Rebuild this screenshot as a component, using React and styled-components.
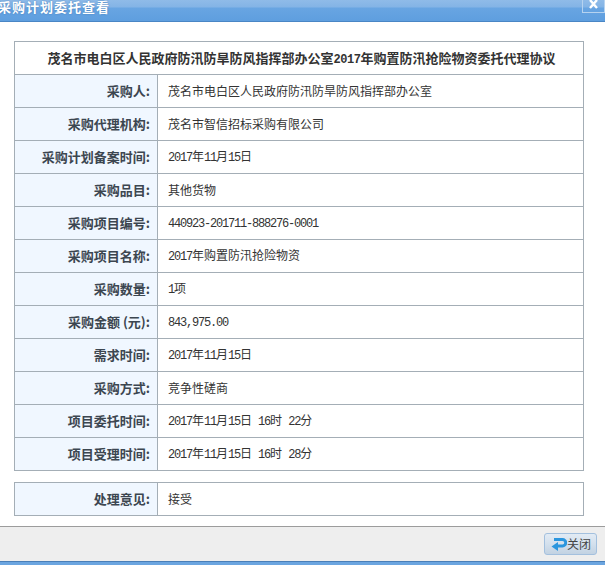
import { createGlobalStyle, styled } from 'styled-components';

const GlobalStyle = createGlobalStyle`
  html, body {
    margin: 0;
    padding: 0;
    background: #fff;
    overflow: hidden;
  }
`;

const cjk = `"Noto Sans CJK SC", "Liberation Sans", sans-serif`;

const Dialog = styled.div`
  width: 605px;
  height: 565px;
  display: flex;
  flex-direction: column;
  font-family: ${cjk};
  color: #333;
  overflow: hidden;
`;

const TitleBar = styled.div`
  flex: 0 0 22px;
  box-sizing: border-box;
  display: flex;
  justify-content: space-between;
  align-items: flex-start;
  background: linear-gradient(#8fbbe8 0, #84b4e6 7px, #68a5e2 8px, #5f9fdf 20px);
  border-bottom: 1px solid #4a86c5;
`;

const TitleText = styled.div`
  margin: -3px 0 0 -2px;
  font-size: 13px;
  line-height: 20px;
  font-weight: 700;
  letter-spacing: 1px;
  color: #fff;
  text-shadow: 0 0 2px #3f78b5;
`;

const CloseBox = styled.div`
  width: 23px;
  height: 13px;
  box-sizing: border-box;
  border: 1px solid #b6d3f0;
  border-top: 0;
  display: flex;
  align-items: flex-start;
  justify-content: center;
`;

const Body = styled.div`
  flex: 1;
  padding: 19px 21px 0 14px;
`;

const Table = styled.table`
  width: 570px;
  border-collapse: collapse;
  table-layout: fixed;
  margin-bottom: ${(p) => p.$gap || 0}px;
`;

const LabelCol = styled.col`
  width: 143px;
`;

const TitleCell = styled.th`
  height: 30px;
  padding: 0 0 2px 5px;
  border: 1px solid #a4aeb6;
  font-size: 13px;
  font-weight: 700;
  color: #333;
  text-align: center;
  white-space: nowrap;
`;

const Label = styled.th`
  height: 30px;
  padding: 0 7px 2px 0;
  border: 1px solid #a4aeb6;
  background: #f0f7ff;
  font-size: 13px;
  font-weight: 700;
  color: #3c4650;
  text-align: right;
  white-space: nowrap;
`;

const Value = styled.td`
  height: 30px;
  padding: 0 0 2px 10px;
  border: 1px solid #a4aeb6;
  font-size: 12px;
  color: #333;
`;

const Num = styled.span`
  font-family: "Liberation Mono", monospace;
  font-size: 12px;
  letter-spacing: ${(p) => p.$spacing || -1.2}px;
  white-space: pre;
`;

const Footer = styled.div`
  flex: 0 0 35px;
  box-sizing: border-box;
  display: flex;
  justify-content: flex-end;
  align-items: center;
  padding: 0 8px 1px 0;
  background: #eeeeee;
  border-top: 1px solid #9c9c9c;
`;

const CloseButton = styled.button`
  width: 53px;
  height: 22px;
  padding: 0 0 0 6px;
  display: flex;
  align-items: center;
  box-sizing: border-box;
  border: 1px solid #a3c0de;
  border-radius: 3px;
  background: linear-gradient(#e2ebf4, #d3e0ed 50%, #c2d2e2);
  font-family: ${cjk};
  font-size: 12px;
  color: #444;
`;

const BottomEdge = styled.div`
  flex: 0 0 4px;
  background: #6ba5e0;
  border-top: 1px solid #4a7fb8;
  box-sizing: border-box;
`;

const fullDate = (
  <>
    <Num>2017</Num>年<Num>11</Num>月<Num>15</Num>日
  </>
);

const rows = [
  ['采购人:', '茂名市电白区人民政府防汛防旱防风指挥部办公室'],
  ['采购代理机构:', '茂名市智信招标采购有限公司'],
  ['采购计划备案时间:', fullDate],
  ['采购品目:', '其他货物'],
  ['采购项目编号:', <Num>440923-201711-888276-0001</Num>],
  ['采购项目名称:', <><Num>2017</Num>年购置防汛抢险物资</>],
  ['采购数量:', <><Num>1</Num>项</>],
  ['采购金额 (元):', <Num>843,975.00</Num>],
  ['需求时间:', fullDate],
  ['采购方式:', '竞争性磋商'],
  ['项目委托时间:', <>{fullDate}<Num> 16</Num>时<Num> 22</Num>分</>],
  ['项目受理时间:', <>{fullDate}<Num> 16</Num>时<Num> 28</Num>分</>],
];

function ReturnIcon() {
  return (
    <svg width="16" height="16" viewBox="0 0 16 16">
      <path d="M3 3.5h8.5a3.2 3.2 0 0 1 0 6.5H6" fill="none" stroke="#2b96de" strokeWidth="3" />
      <path d="M7 6v9L0.5 10.5z" fill="#2b96de" />
    </svg>
  );
}

export default function App() {
  return (
    <Dialog>
      <GlobalStyle />
      <TitleBar>
        <TitleText>采购计划委托查看</TitleText>
        <CloseBox>
          <svg width="9" height="9" viewBox="0 0 9 9">
            <path d="M1 0l7 8M8 0l-7 8" stroke="#fff" strokeWidth="2.4" />
          </svg>
        </CloseBox>
      </TitleBar>
      <Body>
        <Table $gap={11}>
          <colgroup>
            <LabelCol />
            <col />
          </colgroup>
          <tbody>
            <tr>
              <TitleCell colSpan={2}>
                茂名市电白区人民政府防汛防旱防风指挥部办公室<Num $spacing={-0.5}>2017</Num>年购置防汛抢险物资委托代理协议
              </TitleCell>
            </tr>
            {rows.map(([label, value]) => (
              <tr key={label}>
                <Label>{label}</Label>
                <Value>{value}</Value>
              </tr>
            ))}
          </tbody>
        </Table>
        <Table>
          <colgroup>
            <LabelCol />
            <col />
          </colgroup>
          <tbody>
            <tr>
              <Label>处理意见:</Label>
              <Value>接受</Value>
            </tr>
          </tbody>
        </Table>
      </Body>
      <Footer>
        <CloseButton>
          <ReturnIcon />
          关闭
        </CloseButton>
      </Footer>
      <BottomEdge />
    </Dialog>
  );
}
